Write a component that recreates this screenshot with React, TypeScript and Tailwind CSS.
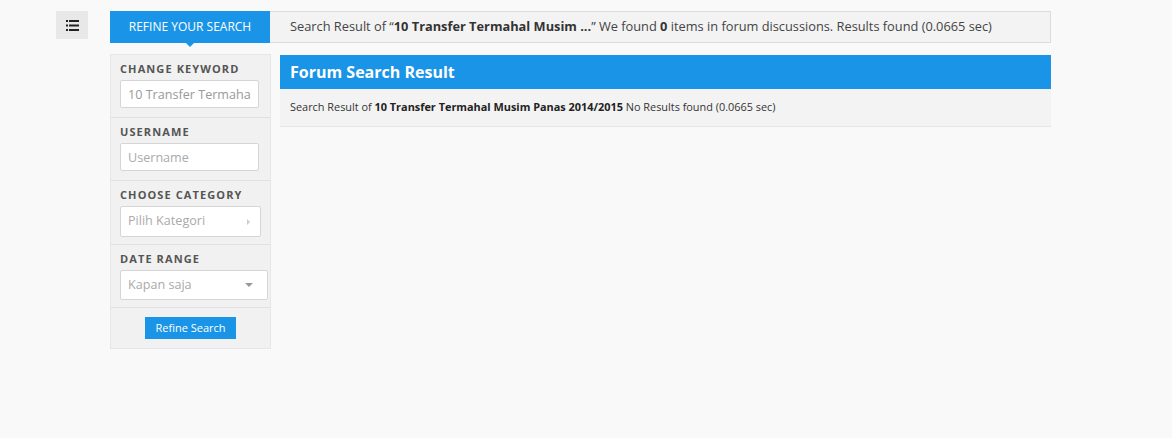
import React from "react";

const font = { fontFamily: '"Open Sans", "Noto Sans", sans-serif' };

function ListIcon() {
  return (
    <svg width="13" height="11" viewBox="0 0 13 11" fill="#222">
      <rect x="0" y="0" width="2" height="2" />
      <rect x="3" y="0" width="10" height="2" />
      <rect x="0" y="4.5" width="2" height="2" />
      <rect x="3" y="4.5" width="10" height="2" />
      <rect x="0" y="9" width="2" height="2" />
      <rect x="3" y="9" width="10" height="2" />
    </svg>
  );
}

function Label({ children }: { children: React.ReactNode }) {
  return (
    <div className="text-[11px] font-bold uppercase tracking-[1.1px] text-[#555] leading-[14px] mb-[4px]">
      {children}
    </div>
  );
}

export default function App() {
  return (
    <div className="min-h-[438px] w-full bg-[#f9f9f9]" style={font}>
      <div className="flex pt-[11px] pl-[56px]">
        <div className="w-[32px] h-[28px] bg-[#e8e8e8] flex items-center justify-center">
          <ListIcon />
        </div>
        <div className="ml-[22px] w-[941px]">
          {/* Top bar */}
          <div className="flex h-[32px] border-t border-b border-r border-[#dcdcdc] bg-[#f3f3f3]">
            <div className="relative -mt-px w-[160px] h-[32px] bg-[#1a94e6] text-white text-[12px] uppercase flex items-center justify-center">
              Refine Your Search
              <div className="absolute left-1/2 -translate-x-1/2 top-[31px] w-0 h-0 border-l-[5px] border-r-[5px] border-t-[5px] border-l-transparent border-r-transparent border-t-[#1a94e6]" />
            </div>
            <div className="pl-[20px] flex items-center text-[12.8px] text-[#444]">
              <span>
                Search Result of “<b className="text-[#333]">10 Transfer Termahal Musim ...</b>” We found{" "}
                <b className="text-[#333]">0</b> items in forum discussions. Results found (0.0665 sec)
              </span>
            </div>
          </div>

          <div className="flex mt-[12px] gap-[9px] items-start">
            {/* Sidebar */}
            <div className="w-[161px] bg-[#f1f1f1] border border-[#e6e6e6] -mt-px">
              <div className="px-[9px] pt-[7px] pb-[9px] border-b border-[#e0e0e0]">
                <Label>Change Keyword</Label>
                <input
                  readOnly
                  defaultValue="10 Transfer Termahal Musim Panas 2014/2015"
                  className="block w-[139px] h-[28px] bg-white border border-[#d5d5d5] rounded-[2px] px-[7px] text-[12.6px] text-[#999] outline-none"
                  style={font}
                />
              </div>
              <div className="px-[9px] pt-[7px] pb-[9px] border-b border-[#e0e0e0]">
                <Label>Username</Label>
                <input
                  readOnly
                  placeholder="Username"
                  className="block w-[139px] h-[28px] bg-white border border-[#d5d5d5] rounded-[2px] px-[7px] text-[12.6px] text-[#999] placeholder:text-[#aaa] outline-none"
                  style={font}
                />
              </div>
              <div className="px-[9px] pt-[7px] pb-[7px] border-b border-[#e0e0e0]">
                <Label>Choose Category</Label>
                <div className="w-[141px] h-[31px] bg-white border border-[#d5d5d5] rounded-[2px] pl-[7px] pr-[10px] flex items-center justify-between text-[12.6px] text-[#aaa]">
                  <span>Pilih Kategori</span>
                  <span className="w-0 h-0 border-t-[3px] border-b-[3px] border-l-[3px] border-t-transparent border-b-transparent border-l-[#ccc]" />
                </div>
              </div>
              <div className="px-[9px] pt-[7px] pb-[7px] border-b border-[#e0e0e0]">
                <Label>Date Range</Label>
                <div className="w-[148px] h-[30px] bg-white border border-[#d5d5d5] rounded-[2px] pl-[7px] pr-[14px] flex items-center justify-between text-[12.6px] text-[#aaa]">
                  <span>Kapan saja</span>
                  <span className="w-0 h-0 border-l-[4px] border-r-[4px] border-t-[4px] border-l-transparent border-r-transparent border-t-[#999]" />
                </div>
              </div>
              <div className="flex justify-center pt-[9px] pb-[9px]">
                <div className="w-[91px] h-[22px] bg-[#1a94e6] text-white text-[11px] flex items-center justify-center">
                  Refine Search
                </div>
              </div>
            </div>

            {/* Main */}
            <div className="flex-1">
              <div className="h-[34px] bg-[#1a94e6] pl-[10px] flex items-center text-white text-[16px] font-bold">
                Forum Search Result
              </div>
              <div className="h-[38px] bg-[#f3f3f3] border-b border-[#e6e6e6] pl-[10px] flex items-center text-[10.9px] text-[#333]">
                <span>
                  Search Result of <b className="text-[#222]">10 Transfer Termahal Musim Panas 2014/2015</b> No Results found (0.0665 sec)
                </span>
              </div>
            </div>
          </div>
        </div>
      </div>
    </div>
  );
}
